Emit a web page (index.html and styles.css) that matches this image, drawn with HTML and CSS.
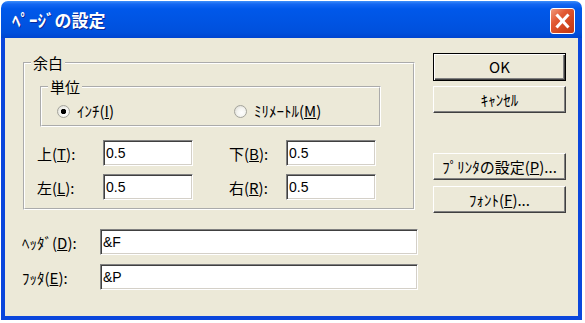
FILE: index.html
```html
<!DOCTYPE html>
<html lang="ja">

<head>
    <meta charset="UTF-8">
    <meta name="viewport" content="width=device-width, initial-scale=1.0">
    <title>ページの設定</title>
    <link rel="stylesheet" href="styles.css">
</head>

<body>
    <div class="window">
        <div class="titlebar">
            <span class="title">ﾍﾟｰｼﾞの設定</span>
            <button class="close" title="閉じる">
                <svg width="25" height="26" viewBox="0 0 25 26">
                    <line x1="7.5" y1="7.5" x2="17.5" y2="18.5" />
                    <line x1="17.5" y1="7.5" x2="7.5" y2="18.5" />
                </svg>
            </button>
        </div>
        <div class="frame">
            <div class="client">
                <div class="main">
                    <fieldset class="group margins">
                        <legend>余白</legend>
                        <fieldset class="group units">
                            <legend>単位</legend>
                            <div class="radios">
                                <label class="radio"><input type="radio" name="unit" checked><span>ｲﾝﾁ(<u>I</u>)</span></label>
                                <label class="radio"><input type="radio" name="unit"><span>ﾐﾘﾒｰﾄﾙ(<u>M</u>)</span></label>
                            </div>
                        </fieldset>
                        <div class="margin-grid">
                            <label>上(<u>T</u>):</label>
                            <input class="field short" value="0.5">
                            <label>下(<u>B</u>):</label>
                            <input class="field short" value="0.5">
                            <label>左(<u>L</u>):</label>
                            <input class="field short" value="0.5">
                            <label>右(<u>R</u>):</label>
                            <input class="field short" value="0.5">
                        </div>
                    </fieldset>
                    <div class="hf-row first">
                        <label>ﾍｯﾀﾞ(<u>D</u>):</label>
                        <input class="field wide" value="&amp;F">
                    </div>
                    <div class="hf-row">
                        <label>ﾌｯﾀ(<u>E</u>):</label>
                        <input class="field wide" value="&amp;P">
                    </div>
                </div>
                <div class="buttons">
                    <button class="btn default">OK</button>
                    <button class="btn cancel">ｷｬﾝｾﾙ</button>
                    <button class="btn printer">ﾌﾟﾘﾝﾀの設定(<u>P</u>)...</button>
                    <button class="btn font">ﾌｫﾝﾄ(<u>F</u>)...</button>
                </div>
            </div>
        </div>
    </div>
</body>

</html>
```

FILE: styles.css
```css
body {
    margin: 0;
    background: #fff;
    font-family: "Noto Sans CJK JP", sans-serif;
    font-size: 15px;
    color: #000;
}

.window {
    margin: 1px 0 0 1px;
    width: 581px;
    height: 319px;
    display: flex;
    flex-direction: column;
}

.titlebar {
    height: 37px;
    flex: none;
    box-sizing: border-box;
    padding: 0 7px 0 11px;
    border-radius: 7px 7px 0 0;
    background: linear-gradient(#3d8ef9 0, #1467f2 3px, #0058ea 8px, #0054e3 55%, #0050dc 85%, #0045d0 100%);
    display: flex;
    align-items: center;
    justify-content: space-between;
}

.title {
    color: #fff;
    font-weight: bold;
    font-size: 17px;
    line-height: 20px;
    text-shadow: 1px 1px #0a2a9a;
}

.close {
    width: 25px;
    height: 26px;
    padding: 0;
    margin-top: 2px;
    border: 1px solid #fff;
    border-radius: 3px;
    background: linear-gradient(135deg, #f09a7c 0, #e25a34 35%, #d0441d 70%, #c03814 100%);
    display: flex;
}

.close svg {
    margin: -1px;
}

.close line {
    stroke: #fff;
    stroke-width: 3;
    stroke-linecap: square;
}

.frame {
    flex: 1;
    display: flex;
    border: 4px solid #0a46dc;
    border-top: 0;
}

.client {
    flex: 1;
    background: #ece9d8;
    display: flex;
    gap: 15px;
    padding: 15px 12px 0 17px;
}

.main {
    width: 396px;
    padding-top: 1px;
}

.group {
    margin: 0;
    box-sizing: border-box;
    border: 2px groove #fff;
    min-inline-size: 0;
}

.group legend {
    padding: 0 2px;
    line-height: 18px;
}

.margins {
    width: 392px;
    margin-left: 1px;
    padding: 0 6px 8px;
}

.units {
    width: 341px;
    margin: 6px 0 0 9px;
    padding: 0 6px 4px;
}

.radios {
    display: grid;
    grid-template-columns: 177px auto;
    padding: 5px 0 0 9px;
}

.radio {
    display: flex;
    align-items: center;
    gap: 7px;
    height: 20px;
    line-height: 18px;
}

.radio input {
    appearance: none;
    margin: 0;
    width: 13px;
    height: 13px;
    border: 1px solid #a4a49c;
    border-radius: 50%;
    background: radial-gradient(circle at 60% 60%, #fff 0, #f4f4f0 45%, #d6d4cc 100%);
}

.radio input:checked {
    background: radial-gradient(circle, #000 0, #000 2.4px, transparent 3px),
        radial-gradient(circle at 60% 60%, #fff 0, #f4f4f0 45%, #d6d4cc 100%);
}

.margin-grid {
    display: grid;
    grid-template-columns: 66px 126px 57px 90px;
    grid-auto-rows: 26px;
    row-gap: 8px;
    align-items: center;
    margin: 13px 0 0 6px;
}

.field {
    box-sizing: border-box;
    height: 26px;
    margin: 0;
    padding: 0 2px;
    border: 1px solid;
    border-color: #808080 #fff #fff #808080;
    box-shadow: inset 1px 1px #404040, inset -1px -1px #d4d0c8;
    background: #fff;
    font-family: "Liberation Sans", sans-serif;
    font-size: 14px;
    outline: none;
}

.short {
    width: 90px;
}

.hf-row {
    display: grid;
    grid-template-columns: 78px 318px;
    align-items: center;
    margin-top: 9px;
}

.hf-row.first {
    margin-top: 19px;
}

.wide {
    width: 318px;
}

.buttons {
    width: 133px;
    display: flex;
    flex-direction: column;
}

.btn {
    height: 27px;
    padding: 0;
    margin: 0;
    font-family: inherit;
    font-size: 15px;
    line-height: 18px;
    color: #000;
    background: #ece9d8;
    border: 1px solid;
    border-color: #fff #404040 #404040 #fff;
    box-shadow: inset -1px -1px #808080;
}

.btn.default {
    height: 28px;
    border: 1px solid #000;
    box-shadow: inset 1px 1px #fff, inset -1px -1px #404040, inset -2px -2px #808080;
}

.btn.cancel {
    margin-top: 5px;
}

.btn.printer {
    margin-top: 40px;
}

.btn.font {
    margin-top: 6px;
}
```
